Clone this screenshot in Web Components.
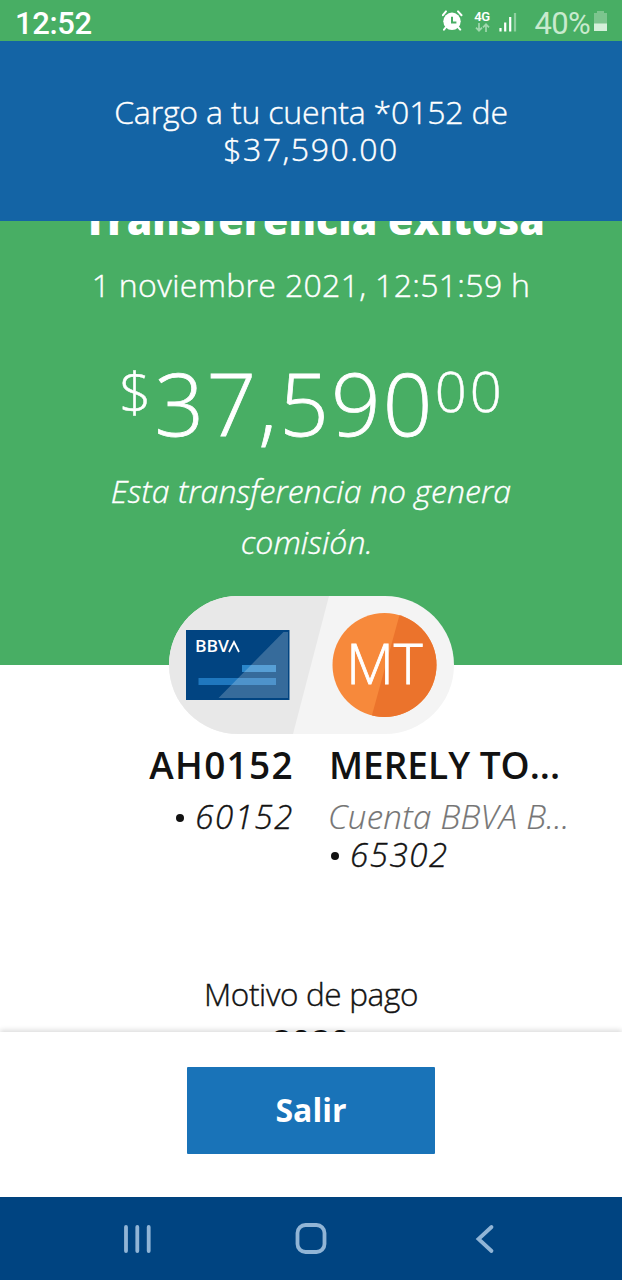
<!DOCTYPE html>
<html lang="es">
<head>
<meta charset="UTF-8">
<title>Transferencia exitosa</title>
<style>
  body {
    margin: 0;
    width: 622px;
    height: 1280px;
    overflow: hidden;
    display: flex;
    flex-direction: column;
    background: #fff;
    font-family: "Open Sans", "Noto Sans", sans-serif;
    font-weight: 300;
    color: #121212;
    -webkit-text-stroke: 0.4px currentColor;
  }
  .total { letter-spacing: 1.5px; }
</style>
</head>
<body>
<status-bar time="12:52" battery="40%"></status-bar>
<push-banner>Cargo a tu cuenta *0152 de<br><span class="total">$37,590.00</span></push-banner>
<transfer-receipt>
  <receipt-header slot="header" whole="37,590" cents="00">
    <span slot="title">Transferencia exitosa</span>
    <span slot="date">1 noviembre 2021, 12:51:59 h</span>
    <span slot="note">Esta transferencia no genera<br>comisión.&nbsp;</span>
  </receipt-header>
  <account-pill slot="pill" initials="MT"></account-pill>
  <account-info slot="from" align="right" name="AH0152" number="60152"></account-info>
  <account-info slot="to" name="MERELY TO..." bank="Cuenta BBVA B..." number="65302"></account-info>
  <payment-reason slot="reason" label="Motivo de pago">2020</payment-reason>
</transfer-receipt>
<action-footer>Salir</action-footer>
<nav-bar></nav-bar>

<script>
class StatusBar extends HTMLElement {
  constructor() {
    super();
    this.attachShadow({ mode: 'open' });
  }

  connectedCallback() {
    this.shadowRoot.innerHTML = `
      <style>
        :host {
          display: flex;
          flex: none;
          align-items: center;
          height: 41px;
          padding: 5px 14px 0 15px;
          box-sizing: border-box;
          background: #48ae64;
          color: #fff;
          font-family: Roboto, sans-serif;
          -webkit-text-stroke: 0;
        }
        .time { flex: 1; font-size: 31px; font-weight: 500; letter-spacing: -0.4px; }
        .alarm { margin-right: 10px; margin-top: -5px; }
        .network {
          display: flex;
          flex-direction: column;
          align-items: center;
          width: 17px;
          margin-right: 8px;
          margin-top: -5px;
          font-size: 13px;
          line-height: 13px;
          font-weight: 600;
          letter-spacing: -0.4px;
        }
        .signal { margin-right: 17px; margin-top: -3px; }
        .battery { font-size: 31px; font-weight: 400; letter-spacing: -0.7px; color: #c8eace; margin-right: 3px; }
        .cell { margin-top: -4px; }
        svg { display: block; }
      </style>
      <span class="time">${this.getAttribute('time')}</span>
      <svg class="alarm" width="22" height="21" viewBox="0 0 22 21">
        <circle cx="10" cy="11.300" r="8.700" fill="#fff"/>
        <path d="M.900 5.200 4 1.400M19.500 5.200 16 1.400M4 17 2 19.600M16 17l2.200 2.600" stroke="#fff" stroke-width="2" stroke-linecap="round"/>
        <path d="M10 6.800v5.600h4.400" fill="none" stroke="#48ae64" stroke-width="2"/>
      </svg>
      <span class="network">4G
        <svg width="15" height="9" viewBox="0 0 15 9" fill="none" stroke="#a0d8ae" stroke-width="1.700">
          <path d="M4 0v7.500M1 4.700l3 3 3-3M11 9V1.500M8 4.300l3-3 3 3"/>
        </svg>
      </span>
      <svg class="signal" width="19" height="20" viewBox="0 0 19 20">
        <path d="M1.500 16v3.500M6.200 10.500v9M11.200 5v14.500" stroke="#fff" stroke-width="2.200"/>
        <path d="M16 1v18.500" stroke="#8fcf9f" stroke-width="2.200"/>
      </svg>
      <span class="battery">${this.getAttribute('battery')}</span>
      <svg class="cell" width="15" height="21" viewBox="0 0 15 21">
        <path d="M4 0h7v2h3v11H1V2h3z" fill="#7cc58e"/>
        <path d="M1 12.500h13V20H1z" fill="#d5f0da"/>
      </svg>
    `;
  }
}

class PushBanner extends HTMLElement {
  constructor() {
    super();
    this.attachShadow({ mode: 'open' });
    this.shadowRoot.innerHTML = `
      <style>
        :host {
          display: block;
          flex: none;
          height: 180px;
          padding-top: 52px;
          box-sizing: border-box;
          background: #1464a5;
          color: #fff;
          font-size: 32px;
          line-height: 37px;
          letter-spacing: -0.18px;
          text-align: center;
        }
      </style>
      <slot></slot>
    `;
  }
}

// Scrolled content: the title is partly under the banner, the reason under the footer
class TransferReceipt extends HTMLElement {
  constructor() {
    super();
    this.attachShadow({ mode: 'open' });
    this.shadowRoot.innerHTML = `
      <style>
        :host {
          display: block;
          flex: none;
          height: 811px;
          overflow: hidden;
        }
        .pill {
          display: flex;
          justify-content: center;
          margin-top: -69px;
        }
        .accounts {
          display: grid;
          grid-template-columns: 293px 1fr;
          column-gap: 36px;
          height: 239px;
        }
      </style>
      <slot name="header"></slot>
      <div class="pill"><slot name="pill"></slot></div>
      <div class="accounts">
        <slot name="from"></slot>
        <slot name="to"></slot>
      </div>
      <slot name="reason"></slot>
    `;
  }
}

class ReceiptHeader extends HTMLElement {
  constructor() {
    super();
    this.attachShadow({ mode: 'open' });
  }

  connectedCallback() {
    this.shadowRoot.innerHTML = `
      <style>
        :host {
          display: flow-root;
          height: 444px;
          background: #48ae64;
          color: #fff;
          text-align: center;
        }
        .title {
          margin-top: -27px;
          font-size: 41px;
          line-height: 50px;
          font-weight: 800;
          letter-spacing: 0.1px;
          padding-left: 6px;
          -webkit-text-stroke: 0;
        }
        .date {
          margin-top: 19px;
          font-size: 32px;
          line-height: 44px;
          letter-spacing: 0.32px;
        }
        .amount {
          display: flex;
          justify-content: center;
          margin-top: 45px;
          padding-left: 2px;
          font-size: 87px;
          line-height: 100px;
          letter-spacing: 2.2px;
          -webkit-text-stroke-width: 0.8px;
        }
        .currency, .cents { font-size: 56px; line-height: 76px; -webkit-text-stroke-width: 0.5px; }
        .currency { margin-right: 1px; }
        .cents { letter-spacing: 3px; }
        .note {
          margin-top: 13px;
          font-size: 32px;
          line-height: 51px;
          font-style: italic;
          letter-spacing: 0.1px;
        }
      </style>
      <div class="title"><slot name="title"></slot></div>
      <div class="date"><slot name="date"></slot></div>
      <div class="amount">
        <span class="currency">$</span>
        <span class="whole">${this.getAttribute('whole')}</span>
        <span class="cents">${this.getAttribute('cents')}</span>
      </div>
      <div class="note"><slot name="note"></slot></div>
    `;
  }
}

class AccountPill extends HTMLElement {
  constructor() {
    super();
    this.attachShadow({ mode: 'open' });
  }

  connectedCallback() {
    this.shadowRoot.innerHTML = `
      <style>
        :host { display: block; -webkit-text-stroke: 0; }
        svg { display: block; }
        text { fill: #fff; }
        .brand { font-weight: 600; }
        .initials { stroke: #fff; stroke-width: 0.8; }
      </style>
      <svg width="285" height="138" viewBox="0 0 285 138">
        <defs>
          <clipPath id="pill"><rect width="285" height="138" rx="69"/></clipPath>
          <clipPath id="avatar"><circle cx="215.500" cy="69" r="52"/></clipPath>
        </defs>
        <g clip-path="url(#pill)">
          <rect width="285" height="138" fill="#f4f4f4"/>
          <path d="M0 0H160L124 138H0z" fill="#e8e8e8"/>
        </g>
        <rect x="17" y="34" width="103.500" height="70" fill="#014481"/>
        <rect x="73" y="69" width="34" height="7" fill="#2a86ca"/>
        <rect x="29.500" y="82" width="77.500" height="7" fill="#1f77be"/>
        <path d="M119 36v66H49.500L114.500 36z" fill="#fff" fill-opacity=".21"/>
        <text class="brand" x="26" y="56" font-size="15.500" textLength="34" lengthAdjust="spacingAndGlyphs">BBV</text>
        <path d="M60 56 65 46l5 10" fill="none" stroke="#fff" stroke-width="1.800"/>
        <g clip-path="url(#avatar)">
          <rect x="160" y="10" width="120" height="120" fill="#f7893b"/>
          <path d="M233 10h50v120h-83z" fill="#eb732c"/>
        </g>
        <text class="initials" x="215.500" y="88" font-size="55" text-anchor="middle">${this.getAttribute('initials')}</text>
      </svg>
    `;
  }
}

class AccountInfo extends HTMLElement {
  constructor() {
    super();
    this.attachShadow({ mode: 'open' });
  }

  connectedCallback() {
    const bank = this.getAttribute('bank');
    this.shadowRoot.innerHTML = `
      <style>
        :host { display: block; padding-top: 6px; white-space: nowrap; }
        :host([align="right"]) { text-align: right; }
        :host([align="right"]) .name { letter-spacing: 1.3px; margin-right: -1px; }
        .name { font-size: 37px; line-height: 50px; font-weight: 600; -webkit-text-stroke: 0; }
        .line { font-size: 33px; line-height: 38px; font-style: italic; letter-spacing: 1.6px; margin-right: -1px; }
        .name + .line { margin-top: 8px; }
        .line.bank { color: #757575; letter-spacing: 0.3px; margin-left: -1px; -webkit-text-stroke-width: 0.2px; }
        .dot {
          display: inline-block;
          width: 8px;
          height: 8px;
          margin: 0 11px 7px 2px;
          border-radius: 50%;
          background: #121212;
        }
      </style>
      <div class="name">${this.getAttribute('name')}</div>
      ${bank ? `<div class="line bank">${bank}</div>` : ''}
      <div class="line"><span class="dot"></span>${this.getAttribute('number')}</div>
    `;
  }
}

class PaymentReason extends HTMLElement {
  constructor() {
    super();
    this.attachShadow({ mode: 'open' });
  }

  connectedCallback() {
    this.shadowRoot.innerHTML = `
      <style>
        :host { display: block; text-align: center; }
        .label { font-size: 31.5px; line-height: 42px; letter-spacing: -0.35px; }
        .value { font-size: 34px; line-height: 53px; font-weight: 700; -webkit-text-stroke: 0; }
      </style>
      <div class="label">${this.getAttribute('label')}</div>
      <div class="value"><slot></slot></div>
    `;
  }
}

class ActionFooter extends HTMLElement {
  constructor() {
    super();
    this.attachShadow({ mode: 'open' });
    this.shadowRoot.innerHTML = `
      <style>
        :host {
          display: flex;
          flex: none;
          justify-content: center;
          align-items: flex-start;
          height: 165px;
          padding-top: 35px;
          box-sizing: border-box;
          background: #fff;
          box-shadow: 0 -2px 5px rgba(0, 0, 0, 0.14);
          position: relative;
        }
        button {
          width: 248px;
          height: 87px;
          padding: 0 0 2px;
          border: 0;
          border-radius: 1px;
          background: #1973b8;
          color: #fff;
          font: 700 32px/85px "Open Sans", sans-serif;
          -webkit-text-stroke: 0;
        }
      </style>
      <button><slot></slot></button>
    `;
  }
}

class NavBar extends HTMLElement {
  constructor() {
    super();
    this.attachShadow({ mode: 'open' });
    this.shadowRoot.innerHTML = `
      <style>
        :host {
          display: flex;
          flex: none;
          justify-content: space-between;
          align-items: center;
          height: 83px;
          padding: 0 120px;
          box-sizing: border-box;
          background: #004481;
        }
        svg { fill: none; stroke: #91b5d6; stroke-width: 3.8; stroke-linecap: round; }
      </style>
      <svg width="34" height="34"><path d="M6 5v24M17.300 5v24M28.700 5v24"/></svg>
      <svg width="34" height="34"><rect x="3.500" y="3" width="27" height="27" rx="8"/></svg>
      <svg width="34" height="34"><path d="M23.500 5 10.500 17l13 12"/></svg>
    `;
  }
}

customElements.define('status-bar', StatusBar);
customElements.define('push-banner', PushBanner);
customElements.define('transfer-receipt', TransferReceipt);
customElements.define('receipt-header', ReceiptHeader);
customElements.define('account-pill', AccountPill);
customElements.define('account-info', AccountInfo);
customElements.define('payment-reason', PaymentReason);
customElements.define('action-footer', ActionFooter);
customElements.define('nav-bar', NavBar);
</script>
</body>
</html>
